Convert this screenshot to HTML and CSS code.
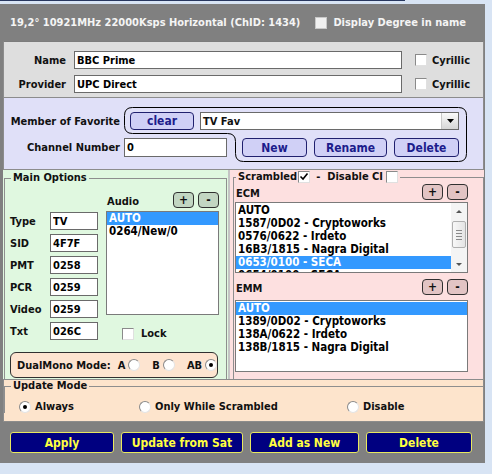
FILE: index.html
```html
<!DOCTYPE html>
<html lang="en">
<head>
    <meta charset="UTF-8">
    <title>Channel Editor</title>
    <link rel="stylesheet" href="styles.css">
</head>
<body>
    <div class="topbar"><div class="topline"></div></div>

    <div class="form">
        <div class="head">
            <span>19,2° 10921MHz 22000Ksps Horizontal (ChID: 1434)</span>
            <span class="chk light"></span>
            <span>Display Degree in name</span>
        </div>

        <div class="sec names">
            <div class="row">
                <span class="lbl">Name</span>
                <input class="edit name-edit" value="BBC Prime">
                <span class="chk"></span>
                <span class="cyr">Cyrillic</span>
            </div>
            <div class="row">
                <span class="lbl">Provider</span>
                <input class="edit name-edit" value="UPC Direct">
                <span class="chk"></span>
                <span class="cyr">Cyrillic</span>
            </div>
        </div>

        <div class="sec fav">
            <svg class="fav-outline" width="477" height="70" viewBox="0 0 477 70">
                <path d="M128.5 9.5 H454.5 Q462.5 9.5 462.5 17.5 V55.5 Q462.5 63.5 454.5 63.5 H239.5 Q231.5 63.5 231.5 55.5 V43.5 Q231.5 35.5 223.5 35.5 H128.5 Q120.5 35.5 120.5 27.5 V17.5 Q120.5 9.5 128.5 9.5 Z" fill="none" stroke="#000" stroke-width="1"/>
            </svg>
            <div class="fav-row">
                <span class="fav-lbl">Member of Favorite</span>
                <button class="fbtn clear">clear</button>
                <div class="combo">
                    <span>TV Fav</span>
                    <span class="drop">
                        <svg width="7" height="4" viewBox="0 0 7 4"><path d="M0 0 H7 L3.5 4 Z" fill="#000"/></svg>
                    </span>
                </div>
            </div>
            <div class="fav-row second">
                <span class="fav-lbl">Channel Number</span>
                <input class="edit chan" value="0">
                <button class="fbtn new">New</button>
                <button class="fbtn rename">Rename</button>
                <button class="fbtn del">Delete</button>
            </div>
        </div>

        <div class="middle">
            <div class="main">
                <fieldset class="grp">
                    <legend>Main Options</legend>
                    <div class="mo-grid">
                        <div class="fields">
                            <div class="frow"><span>Type</span><input class="edit pid" value="TV"></div>
                            <div class="frow"><span>SID</span><input class="edit pid" value="4F7F"></div>
                            <div class="frow"><span>PMT</span><input class="edit pid" value="0258"></div>
                            <div class="frow"><span>PCR</span><input class="edit pid" value="0259"></div>
                            <div class="frow"><span>Video</span><input class="edit pid" value="0259"></div>
                            <div class="frow"><span>Txt</span><input class="edit pid" value="026C"></div>
                        </div>
                        <div class="audio">
                            <div class="list-head">
                                <span>Audio</span>
                                <button class="pm green">+</button>
                                <button class="pm green">-</button>
                            </div>
                            <div class="list audio-list">
                                <div class="item sel">AUTO</div>
                                <div class="item">0264/New/0</div>
                            </div>
                            <div class="lock"><span class="chk"></span><span>Lock</span></div>
                        </div>
                    </div>
                    <div class="dualmono">
                        <span class="dm-lbl">DualMono Mode:</span>
                        <span class="opt">A<span class="rad"></span></span>
                        <span class="opt">B<span class="rad"></span></span>
                        <span class="opt">AB<span class="rad on"></span></span>
                    </div>
                </fieldset>
            </div>

            <div class="scr">
                <fieldset class="grp">
                    <legend class="scr-legend">
                        <span>Scrambled</span><span class="chk on"><svg width="10" height="10" viewBox="0 0 10 10"><path d="M1.5 4.5 L4 7 L8.5 1.5" fill="none" stroke="#000" stroke-width="1.6"/></svg></span>
                        <span class="dash">-</span>
                        <span>Disable CI</span><span class="chk ci"></span>
                    </legend>
                    <div class="list-head ca-head">
                        <span>ECM</span>
                        <button class="pm red">+</button>
                        <button class="pm red">-</button>
                    </div>
                    <div class="list ecm-list">
                        <div class="items">
                            <div class="item">AUTO</div>
                            <div class="item">1587/0D02 - Cryptoworks</div>
                            <div class="item">0576/0622 - Irdeto</div>
                            <div class="item">16B3/1815 - Nagra Digital</div>
                            <div class="item sel">0653/0100 - SECA</div>
                            <div class="item">0654/0100 - SECA</div>
                        </div>
                        <div class="sbar">
                            <span class="arrow up"></span>
                            <span class="thumb"><i></i><i></i><i></i><i></i></span>
                            <span class="arrow down"></span>
                        </div>
                    </div>
                    <div class="list-head ca-head emm-head">
                        <span>EMM</span>
                        <button class="pm red">+</button>
                        <button class="pm red">-</button>
                    </div>
                    <div class="list emm-list">
                        <div class="item sel">AUTO</div>
                        <div class="item">1389/0D02 - Cryptoworks</div>
                        <div class="item">138A/0622 - Irdeto</div>
                        <div class="item">138B/1815 - Nagra Digital</div>
                    </div>
                </fieldset>
            </div>
        </div>

        <div class="sec upd">
            <fieldset class="grp">
                <legend>Update Mode</legend>
                <div class="modes">
                    <span class="mode m1"><span class="rad on"></span>Always</span>
                    <span class="mode m2"><span class="rad"></span>Only While Scrambled</span>
                    <span class="mode"><span class="rad"></span>Disable</span>
                </div>
            </fieldset>
        </div>

        <div class="actions">
            <button class="act apply">Apply</button>
            <button class="act upsat">Update from Sat</button>
            <button class="act addnew">Add as New</button>
            <button class="act delete">Delete</button>
        </div>
    </div>
</body>
</html>
```

FILE: styles.css
```css
html
{
    margin: 0;
    padding: 0;
}
body
{
    margin: 0;
    background-color: #d8e4f4;
    font: bold 11px "DejaVu Sans Condensed", "DejaVu Sans", sans-serif;
    color: #111;
}
button, input
{
    font: inherit;
    margin: 0;
}

.topbar
{
    height: 4px;
}
.topline
{
    width: 405px;
    height: 1px;
    background-color: #27375f;
}

.form
{
    width: 485px;
    background-color: #808080;
}

.head
{
    height: 37px;
    display: flex;
    align-items: center;
    padding-left: 10px;
    color: #f4f4f4;
}
.head .chk
{
    margin: 0 6px 0 15px;
}

/* check boxes + radios */
.chk
{
    display: inline-flex;
    flex-shrink: 0;
    align-items: center;
    justify-content: center;
    width: 12px;
    height: 12px;
    box-sizing: border-box;
    border: 1px solid #8a8a8a;
    border-right-color: #e0e0e0;
    border-bottom-color: #e0e0e0;
    background-color: #fff;
}
.chk.light
{
    background-color: #f0f0f0;
    border-color: #c8c8c8;
}
.rad
{
    display: inline-block;
    flex-shrink: 0;
    position: relative;
    width: 12px;
    height: 12px;
    box-sizing: border-box;
    border-radius: 50%;
    border: 1px solid #8a8a8a;
    border-right-color: #e4e4e4;
    border-bottom-color: #e4e4e4;
    background-color: #fff;
    vertical-align: middle;
}
.rad.on::after
{
    content: "";
    position: absolute;
    left: 3px;
    top: 3px;
    width: 4px;
    height: 4px;
    border-radius: 50%;
    background-color: #000;
}

.edit
{
    box-sizing: border-box;
    height: 18px;
    padding: 0 2px;
    border: 1px solid #6a6a6a;
    background-color: #fff;
    color: #000;
    outline: none;
}

.sec
{
    margin-left: 3px;
    width: 481px;
    box-sizing: border-box;
    border: 1px solid #8c8c8c;
    border-top: none;
}

/* name / provider */
.names
{
    height: 57px;
    border-top: 1px solid #7c7c7c;
    background-color: #dedede;
    padding-top: 9px;
}
.names .row
{
    display: flex;
    align-items: center;
    height: 18px;
    margin-bottom: 6px;
}
.names .lbl
{
    width: 62px;
    text-align: right;
}
.name-edit
{
    width: 328px;
    margin-left: 8px;
}
.names .chk
{
    margin-left: 13px;
}
.cyr
{
    margin-left: 5px;
}

/* favorites */
.fav
{
    position: relative;
    height: 72px;
    background-color: #e0e0f8;
    padding-top: 14px;
}
.fav-outline
{
    position: absolute;
    left: 0;
    top: 0;
    pointer-events: none;
}
.fav-row
{
    display: flex;
    align-items: center;
    height: 18px;
}
.fav-row.second
{
    height: 19px;
    margin-top: 8px;
}
.fav-lbl
{
    width: 116px;
    text-align: right;
}
.fbtn
{
    box-sizing: border-box;
    height: 18px;
    padding: 0;
    border: 1px solid #20206e;
    border-radius: 4px;
    background-color: #d0d0f6;
    color: #1c1c8c;
    font-size: 12px;
}
.fav-row.second .fbtn
{
    height: 19px;
}
.clear
{
    width: 64px;
    margin-left: 10px;
}
.combo
{
    display: flex;
    align-items: center;
    justify-content: space-between;
    box-sizing: border-box;
    width: 259px;
    height: 18px;
    margin-left: 6px;
    padding-left: 2px;
    border: 1px solid #6a6a6a;
    background-color: #fff;
}
.drop
{
    display: flex;
    align-items: center;
    justify-content: center;
    width: 16px;
    height: 16px;
    background: linear-gradient(#fafafa, #d6d6d6);
    border-left: 1px solid #c8c8c8;
}
.chan
{
    width: 103px;
    height: 19px;
    margin-left: 4px;
}
.new
{
    width: 65px;
    margin-left: 15px;
}
.rename
{
    width: 73px;
    margin-left: 7px;
}
.del
{
    width: 65px;
    margin-left: 7px;
}

/* middle panels */
.middle
{
    display: flex;
    gap: 2px;
    margin-left: 3px;
    width: 481px;
    height: 209px;
    background-color: #c4c4c4;
}
.main
{
    width: 225px;
    background-color: #e0f8e0;
}
.scr
{
    flex: 1;
    background-color: #fde0e0;
}
.grp
{
    margin: 1px 1px 0 1px;
    padding: 0 5px;
    border: 1px solid #8e8e8e;
    min-width: 0;
}
.grp legend
{
    padding: 0 2px;
    margin-left: 1px;
    line-height: 14px;
    white-space: nowrap;
}
.main .grp
{
    height: 208px;
    box-sizing: border-box;
    border-bottom: none;
}

.mo-grid
{
    display: grid;
    grid-template-columns: 88px 113px;
    column-gap: 8px;
}
.fields
{
    padding-top: 27px;
}
.frow
{
    display: flex;
    align-items: center;
    height: 18px;
    margin-bottom: 4px;
}
.frow span
{
    width: 40px;
}
.pid
{
    width: 48px;
}

.list-head
{
    display: flex;
    align-items: center;
    height: 22px;
    padding-top: 4px;
}
.list-head span
{
    flex: 1;
    padding-left: 1px;
    padding-top: 2px;
}
.pm
{
    box-sizing: border-box;
    width: 21px;
    height: 16px;
    margin-left: 4px;
    padding: 0;
    border: 1px solid #303030;
    border-radius: 4px;
    font-size: 12px;
    line-height: 12px;
    color: #111;
}
.pm.green
{
    background-color: #c2d6c2;
}
.pm.red
{
    background-color: #e2c4c4;
}

.list
{
    box-sizing: border-box;
    border: 1px solid #7a7a7a;
    background-color: #fff;
    overflow: hidden;
    font-size: 11.5px;
}
.item
{
    line-height: 13px;
    padding-left: 2px;
    white-space: nowrap;
    color: #000;
}
.item.sel
{
    background-color: #3399ff;
    color: #fff;
}
.audio-list
{
    height: 104px;
}
.lock
{
    display: flex;
    align-items: center;
    margin-top: 12px;
    padding-left: 16px;
}
.lock .chk
{
    margin-right: 7px;
}

.dualmono
{
    display: flex;
    align-items: center;
    box-sizing: border-box;
    width: 208px;
    height: 26px;
    margin-top: 8px;
    padding-left: 6px;
    border: 1px solid #303030;
    border-radius: 6px;
    background-color: #fde4d0;
    white-space: nowrap;
}
.dm-lbl
{
    flex-shrink: 0;
}
.opt
{
    display: flex;
    align-items: center;
    flex-shrink: 0;
    margin-left: 7px;
}
.opt + .opt
{
    margin-left: 12px;
}
.opt .rad
{
    margin-left: 3px;
}

/* scrambled */
.scr .grp
{
    margin: 0 0 0 3px;
    padding: 0 0 0 1px;
    height: 210px;
    box-sizing: border-box;
    border-bottom: none;
}
.scr-legend
{
    display: flex;
    align-items: center;
    height: 14px;
    margin-left: 3px;
    padding: 0 3px 0 1px;
}
.scr-legend span
{
    flex-shrink: 0;
}
.scr-legend .chk
{
    margin-left: 1px;
}
.scr-legend .chk.ci
{
    margin-left: 3px;
}
.dash
{
    margin: 0 7px 0 6px;
}
.ca-head
{
    width: 233px;
    height: 18px;
    padding-top: 0;
    margin-top: -1px;
}
.emm-head
{
    margin-top: 5px;
}
.ecm-list
{
    display: flex;
    width: 233px;
    height: 71px;
    margin-top: 1px;
}
.ecm-list .items
{
    flex: 1;
    padding-top: 1px;
}
.sbar
{
    display: flex;
    flex-direction: column;
    align-items: center;
    width: 16px;
    background-color: #f4f4f4;
}
.arrow
{
    width: 0;
    height: 0;
    border-left: 3px solid transparent;
    border-right: 3px solid transparent;
}
.arrow.up
{
    margin-top: 7px;
    border-bottom: 3px solid #555;
}
.arrow.down
{
    margin-top: 15px;
    border-top: 3px solid #555;
}
.thumb
{
    display: flex;
    flex-direction: column;
    align-items: center;
    justify-content: center;
    gap: 2px;
    box-sizing: border-box;
    width: 14px;
    height: 27px;
    margin-top: 8px;
    border: 1px solid #b0b0b0;
    border-radius: 2px;
    background: linear-gradient(90deg, #f8f8f8, #e4e4e4);
}
.thumb i
{
    width: 6px;
    height: 1px;
    background-color: #8a8a8a;
}
.emm-list
{
    width: 233px;
    height: 72px;
    margin-top: 4px;
    padding-top: 1px;
}

/* update mode */
.upd
{
    height: 43px;
    background-color: #fde4cc;
    border-top: 1px solid #8c8c8c;
}
.upd .grp
{
    margin: 0 0 0 0;
    border-right: none;
    border-bottom: none;
}
.upd .grp legend
{
    line-height: 12px;
}
.modes
{
    display: flex;
    align-items: center;
    height: 14px;
    margin-top: 7px;
    padding-left: 9px;
}
.mode .rad
{
    margin-right: 4px;
}
.m1
{
    width: 120px;
}
.m2
{
    width: 208px;
}

/* bottom buttons */
.actions
{
    display: flex;
    gap: 7px;
    height: 41px;
    box-sizing: border-box;
    padding: 10px 0 0 10px;
}
.act
{
    box-sizing: border-box;
    height: 21px;
    padding: 0;
    border: 1px solid #e8e860;
    border-radius: 3px;
    background-color: #000080;
    color: #ffff40;
    font-size: 12px;
}
.apply
{
    width: 104px;
}
.upsat
{
    width: 122px;
}
.addnew
{
    width: 109px;
}
.delete
{
    width: 106px;
}
```
